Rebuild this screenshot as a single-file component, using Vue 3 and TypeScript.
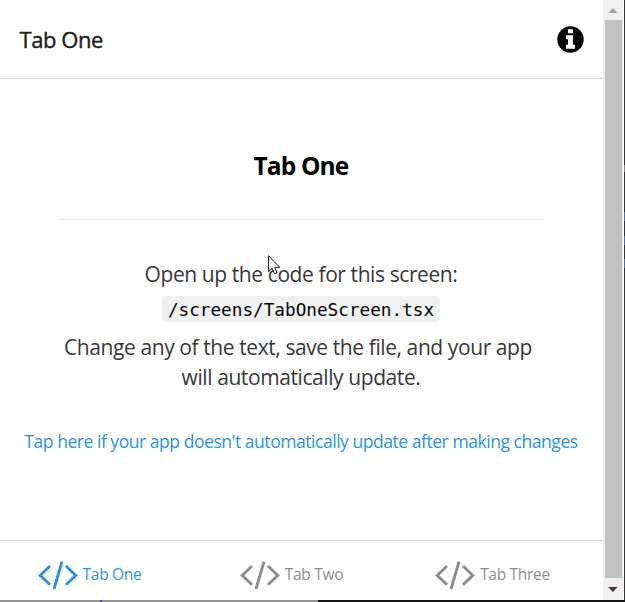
<script setup lang="ts">
interface Tab {
  id: string
  label: string
}

const tabs: Tab[] = [
  { id: 'one', label: 'Tab One' },
  { id: 'two', label: 'Tab Two' },
  { id: 'three', label: 'Tab Three' },
]
const active = 'one'
</script>

<template>
  <div class="window">
    <div class="row">
      <div class="app">
        <header class="header">
          <span class="header-title">Tab One</span>
          <svg class="info" viewBox="0 0 27 27" width="27" height="27">
            <circle cx="13.5" cy="13.5" r="13.2" fill="#000" />
            <path d="M11 3.2h5v4h-5zM9 9.2h7v9.6h2v4H9v-4h2v-5.6H9z" fill="#fff" />
          </svg>
        </header>
        <main class="content">
          <h1 class="title">Tab One</h1>
          <div class="separator"></div>
          <p class="text open">Open up the code for this screen:</p>
          <code class="code">/screens/TabOneScreen.tsx</code>
          <p class="text change">Change any of the text, save the file, and your app</p>
          <p class="text">will automatically update.</p>
          <a class="link">Tap here if your app doesn't automatically update after making changes</a>
        </main>
        <nav class="tabs">
          <div v-for="tab in tabs" :key="tab.id" class="tab" :class="{ active: tab.id === active }">
            <svg viewBox="0 0 40 30" width="40" height="30">
              <path
                d="M12 6 2.2 15.4 12 24.8M28 6 37.8 15.4 28 24.8M24 1.6 16 29"
                fill="none"
                stroke="currentColor"
                stroke-width="2.9"
              />
            </svg>
            <span class="label">{{ tab.label }}</span>
          </div>
        </nav>
      </div>
      <div class="scrollbar">
        <svg class="arrow" viewBox="0 0 20 20" width="20" height="20"><path d="M5.5 13 10 8l4.5 5z" fill="#a3a3a3" /></svg>
        <div class="thumb"></div>
        <svg class="arrow" viewBox="0 0 20 22" width="20" height="22"><path d="M5.2 9h9.4l-4.7 5z" fill="#503630" /></svg>
      </div>
      <div class="edge"></div>
    </div>
    <div class="bottom"></div>
    <svg class="cursor" viewBox="0 0 13 20" width="13" height="20">
      <path d="M.5.7v16l3.6-3.4 2.5 5.5 2.5-1.1-2.4-5.4h5z" fill="#fff" stroke="#111" stroke-width="1" />
    </svg>
  </div>
</template>

<style>
body {
  margin: 0;
  overflow: hidden;
}
</style>

<style scoped>
.window {
  position: relative;
  width: 625px;
  height: 602px;
  overflow: hidden;
  background: #fff;
  font-family: 'Open Sans', 'Noto Sans', sans-serif;
  white-space: nowrap;
}
.row {
  display: flex;
  height: 600px;
}
.app {
  display: flex;
  flex-direction: column;
  width: 603px;
}
.header {
  box-sizing: border-box;
  display: flex;
  align-items: center;
  justify-content: space-between;
  height: 79px;
  padding: 1px 19px 0 19.5px;
  border-bottom: 1px solid #d8d8d8;
}
.header-title {
  padding-bottom: 2px;
  color: #1c1c1e;
  font-size: 22px;
  font-weight: 500;
  line-height: 30px;
  letter-spacing: -0.45px;
  -webkit-text-stroke: 0.4px #1c1c1e;
}
.content {
  display: flex;
  flex: 1;
  flex-direction: column;
  align-items: center;
  padding-right: 1px;
}
.title {
  margin: 70px 0 0;
  color: #000;
  font-size: 24.5px;
  font-weight: 700;
  line-height: 34px;
  letter-spacing: -0.85px;
}
.separator {
  width: 484px;
  height: 1px;
  margin-top: 36px;
  background: #eee;
}
.text {
  margin: 0;
  color: #383838;
  font-size: 21px;
  line-height: 30px;
  letter-spacing: -0.41px;
}
.open {
  margin-top: 39px;
}
.change {
  padding-right: 6px;
}
.code {
  box-sizing: border-box;
  width: 278px;
  height: 26px;
  margin: 7px 0 10px;
  border-radius: 4px;
  background: #eff1f1;
  color: #050505;
  font-family: 'DejaVu Sans Mono', monospace;
  font-size: 17.7px;
  line-height: 28px;
  text-align: center;
}
.link {
  margin-top: 36px;
  color: #2e93dc;
  font-size: 17.6px;
  line-height: 26px;
  letter-spacing: -0.5px;
}
.tabs {
  box-sizing: border-box;
  display: grid;
  grid-template-columns: repeat(3, 1fr);
  height: 60px;
  padding-top: 5px;
  border-top: 1px solid #d8d8d8;
}
.tab {
  display: flex;
  align-items: center;
  justify-content: center;
  padding: 9px 20px 0 0;
  height: 49px;
  box-sizing: border-box;
  gap: 5px;
  color: #8e8e8f;
}
.tab.active {
  padding-right: 22px;
  color: #2e93dc;
}
.label {
  padding-bottom: 2px;
  font-size: 15.5px;
  line-height: 22px;
  letter-spacing: -0.3px;
}
.scrollbar {
  display: flex;
  flex-direction: column;
  width: 20px;
  background: #f0f0f0;
}
.arrow {
  flex: none;
}
.thumb {
  flex: 1;
  width: 17px;
  margin-left: 2px;
  background: #c1c1c1;
}
.edge {
  width: 1px;
  margin-left: 1px;
  background: linear-gradient(
    #333 0 165px, #8a8487 165px 172px, #333 172px 212px, #3d76b8 212px 221px, #333 221px 236px,
    #3d76b8 236px 245px, #333 245px 259px, #3d76b8 259px 268px, #333 268px
  );
}
.bottom {
  height: 2px;
  background: linear-gradient(90deg, #959292 0 100px, #3657a0 100px 102px, #959292 102px 318px, #171515 318px);
}
.cursor {
  position: absolute;
  left: 268px;
  top: 255px;
}
</style>
